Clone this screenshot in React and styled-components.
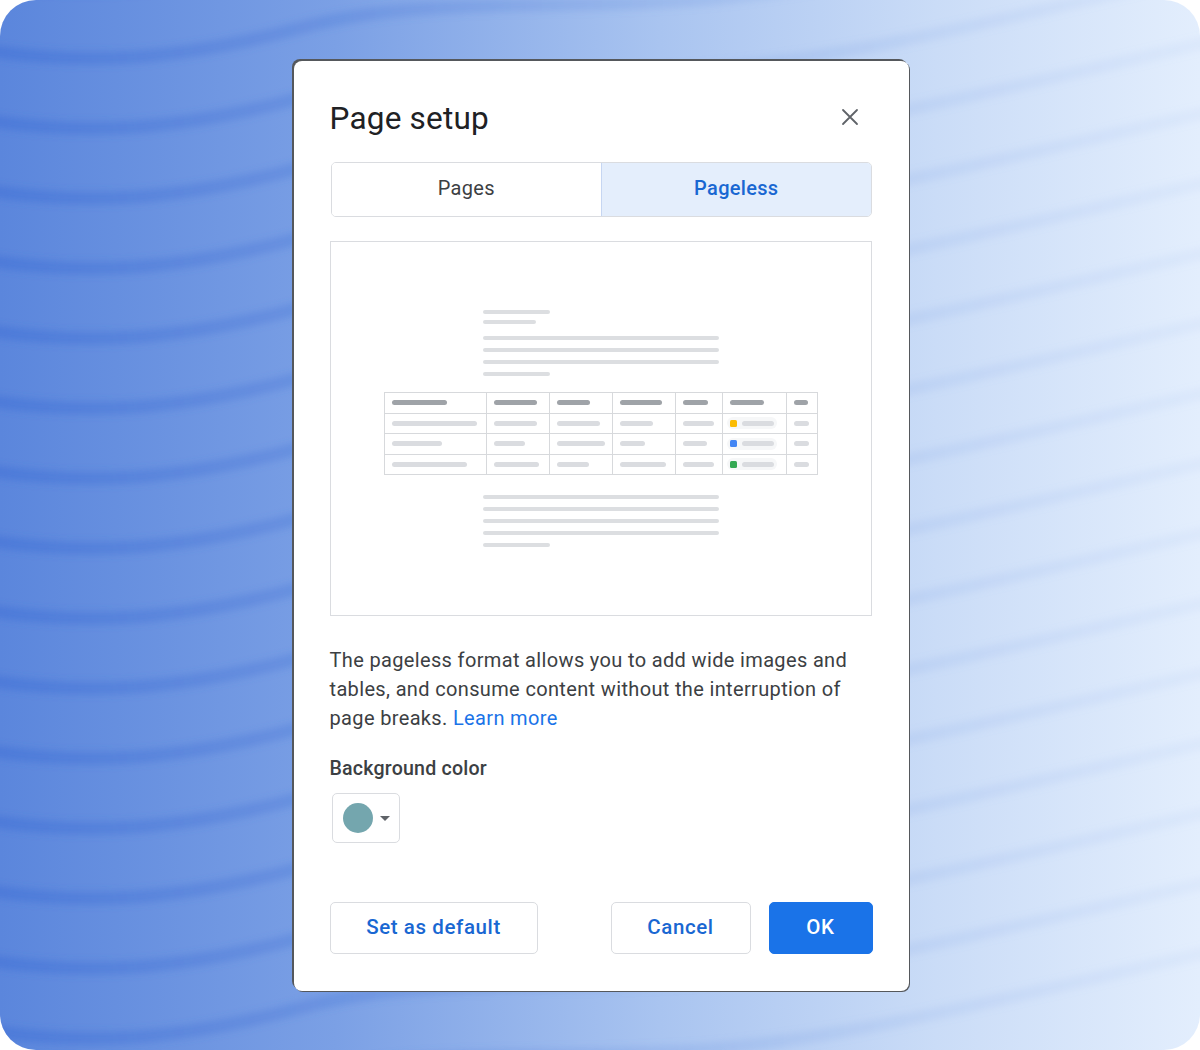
import React from 'react';
import styled, {createGlobalStyle} from 'styled-components';

const GlobalStyle = createGlobalStyle`
  html, body {
    margin: 0;
    padding: 0;
    background: #ffffff;
  }
  body {
    font-family: Roboto, "Liberation Sans", Arial, sans-serif;
  }
`;

const Stage = styled.div`
  position: relative;
  width: 1200px;
  height: 1050px;
  border-radius: 36px;
  overflow: hidden;
  background: linear-gradient(90deg, #5b86dc 0%, #7ba0e5 28%, #a9c4f0 55%, #cadcf7 78%, #e3eefd 100%);
  display: flex;
  justify-content: center;
  align-items: flex-start;
  padding-top: 61px;
  box-sizing: border-box;
`;

const Waves = styled.svg`
  position: absolute;
  inset: 0;
  width: 100%;
  height: 100%;
  pointer-events: none;
`;

const Dialog = styled.div`
  position: relative;
  width: 615px;
  margin-left: 2px;
  background: #ffffff;
  border-radius: 8px;
  box-shadow: -2px -2px 0 #55585c, 1px 1px 0 #55585c;
  padding: 36px 37px 37px;
  box-sizing: border-box;
  display: flex;
  flex-direction: column;
`;

const Header = styled.div`
  display: flex;
  align-items: center;
  justify-content: space-between;
  height: 42px;
`;

const Title = styled.h1`
  margin: 0 0 0 -1px;
  font-size: 31.5px;
  font-weight: 400;
  color: #202124;
  letter-spacing: 0.2px;
`;

const CloseButton = styled.button`
  border: none;
  background: none;
  padding: 0;
  margin: 0 13px 2px 0;
  width: 18px;
  height: 18px;
  display: flex;
  cursor: pointer;
`;

const Tabs = styled.div`
  display: grid;
  grid-template-columns: 1fr 1fr;
  margin-top: 23px;
  height: 55px;
  border: 1px solid #dadce0;
  border-radius: 5px;
  overflow: hidden;
  box-sizing: border-box;
`;

const Tab = styled.div`
  display: flex;
  align-items: center;
  justify-content: center;
  padding-bottom: 4px;
  font-size: 20px;
  letter-spacing: 0.3px;
  font-weight: ${p => (p.$active ? 500 : 400)};
  color: ${p => (p.$active ? '#1967d2' : '#3c4043')};
  background: ${p => (p.$active ? '#e4eefc' : '#ffffff')};
  border-left: ${p => (p.$active ? '1px solid #c6d6f2' : 'none')};
`;

const Preview = styled.div`
  margin-top: 24px;
  margin-left: -1px;
  height: 375px;
  border: 1px solid #dadce0;
  box-sizing: border-box;
  display: flex;
  flex-direction: column;
  align-items: center;
  justify-content: center;
`;

const TextBlock = styled.div`
  width: 236px;
  display: flex;
  flex-direction: column;
  gap: 8px;
`;

const Line = styled.div`
  width: ${p => p.$w}px;
  height: 4px;
  border-radius: 2px;
  background: #dcdee1;
  margin-top: ${p => p.$gap || 0}px;
`;

const Table = styled.div`
  display: grid;
  grid-template-columns: 102px 63px 63px 63px 47px 64px 31px;
  border-top: 1px solid #d7d9dc;
  border-left: 1px solid #d7d9dc;
  margin: 16px 0 20px;
`;

const Cell = styled.div`
  height: 19.5px;
  border-right: 1px solid #d7d9dc;
  border-bottom: 1px solid #d7d9dc;
  display: flex;
  align-items: center;
  padding-left: 7px;
`;

const Bar = styled.div`
  width: ${p => p.$w}px;
  height: 5px;
  border-radius: 3px;
  background: ${p => (p.$head ? '#9fa3a8' : '#dadce0')};
`;

const Chip = styled.div`
  display: flex;
  align-items: center;
  gap: 5px;
  height: 12px;
  padding: 0 3px;
  margin-left: -3px;
  border-radius: 6px;
  background: #f6f7f8;
`;

const Dot = styled.div`
  width: 7px;
  height: 7px;
  border-radius: 1.5px;
  background: ${p => p.$color};
`;

const Description = styled.p`
  margin: 30px 0 0 -1px;
  font-size: 20px;
  line-height: 29px;
  letter-spacing: 0.35px;
  color: #3c4043;
`;

const Link = styled.a`
  color: #1a73e8;
  text-decoration: none;
`;

const Label = styled.div`
  margin-top: 22px;
  margin-left: -1px;
  font-size: 19.6px;
  line-height: 28px;
  letter-spacing: 0.2px;
  font-weight: 500;
  color: #3c4043;
`;

const ColorPicker = styled.button`
  margin-top: 10px;
  margin-left: 1px;
  width: 68px;
  height: 50px;
  border: 1px solid #dadce0;
  border-radius: 5px;
  background: #ffffff;
  display: flex;
  align-items: center;
  padding: 0 0 0 10px;
  gap: 7px;
  box-sizing: border-box;
  cursor: pointer;
`;

const Swatch = styled.div`
  width: 30px;
  height: 30px;
  border-radius: 50%;
  background: #74a6ae;
`;

const Caret = styled.div`
  width: 0;
  height: 0;
  border-left: 5px solid transparent;
  border-right: 5px solid transparent;
  border-top: 5px solid #5f6368;
`;

const Footer = styled.div`
  display: flex;
  align-items: center;
  margin: 59px -1px 0 -1px;
  gap: 18px;
`;

const Button = styled.button`
  height: 52px;
  width: ${p => p.$w}px;
  margin-left: ${p => (p.$push ? 'auto' : '0')};
  border-radius: 5px;
  border: 1px solid ${p => (p.$primary ? '#1a73e8' : '#dadce0')};
  background: ${p => (p.$primary ? '#1a73e8' : '#ffffff')};
  color: ${p => (p.$primary ? '#ffffff' : '#1967d2')};
  font-family: Roboto, "Liberation Sans", Arial, sans-serif;
  font-size: 20.5px;
  font-weight: 500;
  letter-spacing: 0.6px;
  padding: 0 0 2px;
  cursor: pointer;
`;

const topLines = [67, 53, 236, 236, 236, 67];
const bottomLines = [236, 236, 236, 236, 67];

const tableRows = [
  {head: true, bars: [55, 43, 33, 42, 25, 34, 14]},
  {bars: [85, 43, 43, 33, 31, null, 15], dot: '#fbbc04'},
  {bars: [50, 31, 48, 25, 24, null, 15], dot: '#4285f4'},
  {bars: [75, 45, 32, 46, 31, null, 15], dot: '#34a853'},
];

const waveYs = [];
for (let y = -20; y < 1150; y += 70) waveYs.push(y);

const wavePath = y =>
  `M -40 ${y - 4} C 80 ${y + 18}, 180 ${y + 10}, 300 ${y - 22} S 560 ${y - 40}, 700 ${y - 50} S 1000 ${y - 100}, 1260 ${y - 160}`;

const App = () => (
  <>
    <GlobalStyle />
    <Stage>
      <Waves viewBox="0 0 1200 1050" preserveAspectRatio="none">
        <defs>
          <linearGradient id="waveStroke" x1="0" y1="0" x2="1200" y2="0" gradientUnits="userSpaceOnUse">
            <stop offset="0" stopColor="#3f6fd6" stopOpacity="0.5" />
            <stop offset="0.3" stopColor="#4a78d8" stopOpacity="0.3" />
            <stop offset="0.75" stopColor="#7fa3e6" stopOpacity="0.16" />
            <stop offset="1" stopColor="#9ab8ee" stopOpacity="0.1" />
          </linearGradient>
          <filter id="soft" x="-5%" y="-20%" width="110%" height="140%">
            <feGaussianBlur stdDeviation="3.5" />
          </filter>
        </defs>
        <g filter="url(#soft)" fill="none" stroke="url(#waveStroke)" strokeWidth="13">
          {waveYs.map(y => (
            <path key={y} d={wavePath(y)} />
          ))}
        </g>
      </Waves>
      <Dialog>
        <Header>
          <Title>Page setup</Title>
          <CloseButton aria-label="Close">
            <svg width="18" height="18" viewBox="0 0 18 18">
              <path d="M2 2 L16 16 M16 2 L2 16" stroke="#5f6368" strokeWidth="1.8" strokeLinecap="round" />
            </svg>
          </CloseButton>
        </Header>
        <Tabs>
          <Tab>Pages</Tab>
          <Tab $active>Pageless</Tab>
        </Tabs>
        <Preview>
          <TextBlock>
            {topLines.map((w, i) => (
              <Line key={i} $w={w} $gap={i === 2 ? 4 : i === 1 ? -2 : 0} />
            ))}
          </TextBlock>
          <Table>
            {tableRows.map((row, r) =>
              row.bars.map((w, c) => (
                <Cell key={`${r}-${c}`}>
                  {w === null ? (
                    <Chip>
                      <Dot $color={row.dot} />
                      <Bar $w={32} />
                    </Chip>
                  ) : (
                    <Bar $w={w} $head={row.head} />
                  )}
                </Cell>
              )),
            )}
          </Table>
          <TextBlock>
            {bottomLines.map((w, i) => (
              <Line key={i} $w={w} />
            ))}
          </TextBlock>
        </Preview>
        <Description>
          The pageless format allows you to add wide images and tables, and consume content without the
          interruption of page breaks. <Link href="#">Learn more</Link>
        </Description>
        <Label>Background color</Label>
        <ColorPicker aria-label="Background color">
          <Swatch />
          <Caret />
        </ColorPicker>
        <Footer>
          <Button $w={208}>Set as default</Button>
          <Button $w={140} $push>
            Cancel
          </Button>
          <Button $w={104} $primary>
            OK
          </Button>
        </Footer>
      </Dialog>
    </Stage>
  </>
);

export default App;
